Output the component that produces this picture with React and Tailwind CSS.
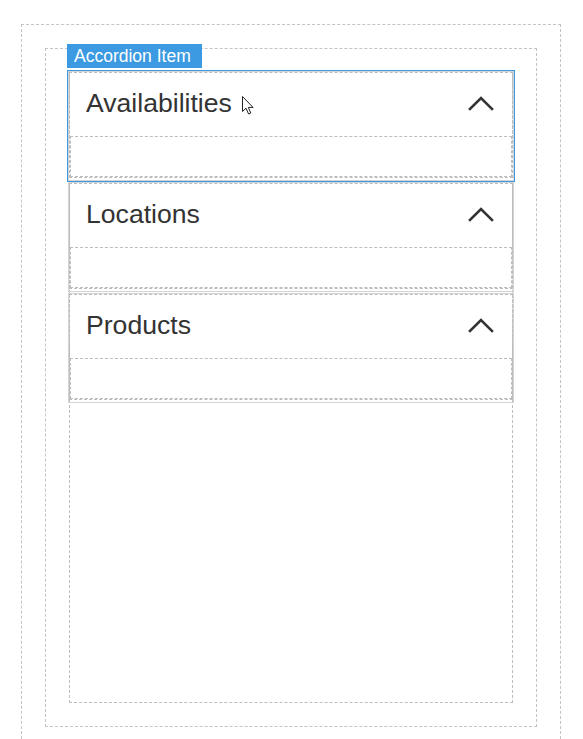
const items = ["Availabilities", "Locations", "Products"];

function Chevron() {
  return (
    <svg width="26" height="16" viewBox="0 0 26 16" fill="none">
      <polyline
        points="2,14 13,3 24,14"
        stroke="#333"
        strokeWidth="2.6"
        strokeLinecap="square"
      />
    </svg>
  );
}

function Cursor() {
  return (
    <svg width="13" height="19" viewBox="0 0 13 19" className="ml-[10px] mt-[4px]">
      <path
        d="M0.5 0.5 L0.5 15.5 L4 12.2 L6.6 18 L8.8 17 L6.3 11.4 L11 11.4 Z"
        fill="#fff"
        stroke="#222"
        strokeWidth="1"
        strokeLinejoin="round"
      />
    </svg>
  );
}

function AccordionItem({ title, selected }) {
  return (
    <div
      className={`border border-[#d4d4d4] pb-[2px] ${
        selected ? "outline outline-1 outline-[#3b9ae1]" : ""
      }`}
    >
      <div className="border border-dashed border-[#bdbdbd]">
        {/* Header */}
        <div className="h-[63px] flex items-center justify-between pl-[16px] pr-[18px] pb-[3px]">
          <div className="flex items-center">
            <span className="text-[26.6px] text-[#333] leading-none font-['Liberation_Sans',Arial,sans-serif]">
              {title}
            </span>
            {selected && <Cursor />}
          </div>
          <Chevron />
        </div>
        {/* Body */}
        <div className="h-[41px] border border-dashed border-[#bdbdbd]" />
      </div>
    </div>
  );
}

export default function App() {
  return (
    <div className="h-[739px] overflow-hidden bg-white pt-[24px] pl-[21px] font-['Liberation_Sans',Arial,sans-serif]">
      <div className="w-[540px] h-[715px] border border-b-0 border-dashed border-[#c4c4c4] pt-[23px] pl-[23px]">
        <div className="relative w-[492px] h-[679px] border border-dashed border-[#c4c4c4] pt-[21px] pl-[23px]">
          {/* Selection label */}
          <div className="absolute left-[21px] -top-[5px] h-[24px] w-[135px] bg-[#3b9ae1] text-white text-[17.5px] leading-[24px] pl-[7px]">
            Accordion Item
          </div>

          {/* Drop container */}
          <div className="w-[444px] h-[633px] border border-dashed border-[#bdbdbd]">
            <div className="-mx-[2px] flex flex-col gap-px">
              {items.map((t, i) => (
                <AccordionItem key={t} title={t} selected={i === 0} />
              ))}
            </div>
          </div>
        </div>
      </div>
    </div>
  );
}
